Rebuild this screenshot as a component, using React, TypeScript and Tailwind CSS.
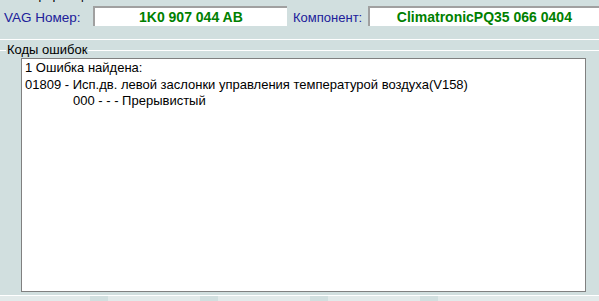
import React from 'react';

const lines = [
  '1 Ошибка найдена:',
  '01809 - Исп.дв. левой заслонки управления температурой воздуха(V158)',
];

function ValueBox({ value, width }: { value: string; width: string }) {
  return (
    <div
      className={`${width} h-[20px] bg-white border-t-2 border-l-2 border-[#a0a0a0] flex items-center justify-center text-[14px] font-bold text-[#008000]`}
    >
      {value}
    </div>
  );
}

export default function App() {
  return (
    <div
      className="w-[599px] h-[301px] bg-[#d1dfdf] overflow-hidden flex flex-col"
      style={{ fontFamily: '"Liberation Sans", Arial, sans-serif' }}
    >
      <div className="h-[39px] relative">
        <div className="absolute left-[18px] -top-[12px] text-[13px] text-black leading-[13px]">
          Информация
        </div>
        <div className="flex items-start pt-[6px]">
          <span className="ml-[4px] w-[89px] pt-[2px] text-[13.5px] text-[#20209a]">VAG Номер:</span>
          <ValueBox value="1K0 907 044 AB" width="w-[195px]" />
          <span className="ml-[6px] w-[75px] pt-[2px] text-[13px] text-[#20209a]">Компонент:</span>
          <ValueBox value="ClimatronicPQ35 066 0404" width="w-[232px]" />
        </div>
      </div>
      <div className="h-px bg-white" />
      <div className="h-[255px] flex flex-col">
        <div className="h-[18px] flex items-start pt-[2px]">
          <div className="w-[6px] h-px bg-white mt-[8px]" />
          <span className="text-[13px] leading-[15px] text-black px-[1px]">Коды ошибок</span>
          <div className="flex-1 h-px bg-white mt-[8px]" />
        </div>
        <div className="ml-[21px] w-[565px] h-[234px] bg-white border border-[#808080] px-[3px] pt-[1px] text-[13px] leading-[16.5px] text-black">
          {lines.map((l, i) => (
            <div key={i}>{l}</div>
          ))}
          <div className="pl-[48px]">000 - - - Прерывистый</div>
        </div>
      </div>
      <div className="h-px bg-white" />
      <div className="flex-1 bg-[#e2eaea] flex">
        <div className="ml-[90px] w-[18px] bg-[#d1dfdf]" />
        <div className="ml-[92px] w-[18px] bg-[#d1dfdf]" />
        <div className="ml-[92px] w-[18px] bg-[#d1dfdf]" />
        <div className="ml-[92px] w-[18px] bg-[#d1dfdf]" />
      </div>
    </div>
  );
}
